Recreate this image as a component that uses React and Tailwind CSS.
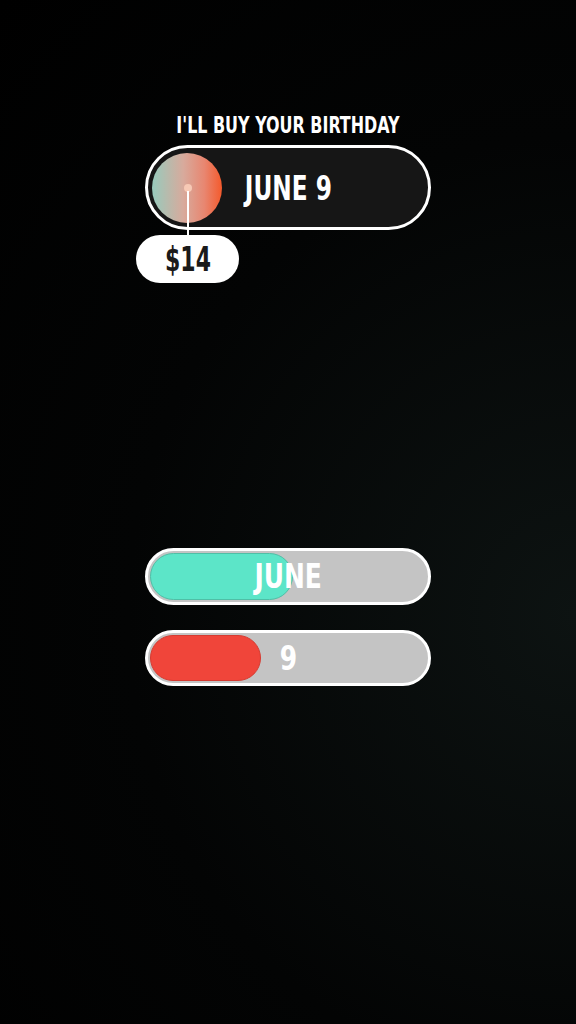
export default function App() {
  const font = { fontFamily: '"DejaVu Sans Condensed", "DejaVu Sans", sans-serif' };
  return (
    <div className="w-[576px] h-[1024px] bg-[radial-gradient(ellipse_at_100%_60%,#0d1312_0%,#030404_55%,#000_100%)] flex flex-col items-center" style={font}>
      <div className="mt-[112px] text-white text-[23px] font-bold leading-[26px] uppercase scale-x-[0.77]">I'LL BUY YOUR BIRTHDAY</div>
      <div className="relative mt-[7px] w-[286px] h-[85px] rounded-full border-[3px] border-white bg-[#161616] flex items-center">
        <div className="ml-[4px] w-[70px] h-[70px] rounded-full bg-[linear-gradient(90deg,#97cbbd_0%,#d8aa9c_45%,#e88670_75%,#f45a2c_100%)]"></div>
        <div className="flex-1 flex justify-center pr-[74px]">
          <span className="inline-block text-white text-[34px] font-bold leading-none scale-x-[0.76]">JUNE 9</span>
        </div>
        <div className="absolute left-[36px] top-[36px] w-[8px] h-[8px] rounded-full bg-[#f7c9b5]"></div>
        <div className="absolute left-[39px] top-[43px] w-[2px] h-[47px] bg-white"></div>
        <div className="absolute left-[-12px] top-[87px] w-[103px] h-[48px] rounded-full bg-white flex items-center justify-center">
          <span className="inline-block text-[#1a1a1a] text-[33px] font-bold leading-none scale-x-[0.74]">$14</span>
        </div>
      </div>
      <div className="mt-[318px] relative w-[286px] h-[57px] rounded-full border-[3px] border-white bg-[#c4c4c4] flex items-center p-[2px]">
        <div className="w-[143px] h-full rounded-full bg-[#5ce5c8] border border-[#4fbfa6]"></div>
        <div className="absolute inset-0 flex items-center justify-center">
          <span className="inline-block text-white text-[33px] font-bold leading-none scale-x-[0.84]">JUNE</span>
        </div>
      </div>
      <div className="mt-[25px] relative w-[286px] h-[56px] rounded-full border-[3px] border-white bg-[#c4c4c4] flex items-center p-[2px]">
        <div className="w-[111px] h-full rounded-full bg-[#f0453a] border border-[#d63b31]"></div>
        <div className="absolute inset-0 flex items-center justify-center">
          <span className="inline-block text-white text-[33px] font-bold leading-none scale-x-[0.84]">9</span>
        </div>
      </div>
    </div>
  );
}
